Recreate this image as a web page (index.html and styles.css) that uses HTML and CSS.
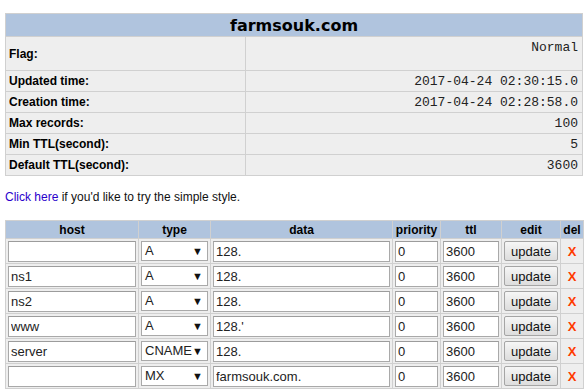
FILE: index.html
```html
<!DOCTYPE html>
<html>
<head>
<meta charset="utf-8">
<link rel="stylesheet" href="styles.css">
</head>
<body>
<div class="page">
  <table class="info">
    <colgroup><col class="c-label"><col></colgroup>
    <tr><th colspan="2" class="title">farmsouk.com</th></tr>
    <tr class="flag"><td class="label">Flag:</td><td class="val top">Normal</td></tr>
    <tr><td class="label">Updated time:</td><td class="val">2017-04-24 02:30:15.0</td></tr>
    <tr><td class="label">Creation time:</td><td class="val">2017-04-24 02:28:58.0</td></tr>
    <tr><td class="label">Max records:</td><td class="val">100</td></tr>
    <tr><td class="label">Min TTL(second):</td><td class="val">5</td></tr>
    <tr><td class="label">Default TTL(second):</td><td class="val">3600</td></tr>
  </table>

  <p class="note"><a href="#" class="link">Click here</a> if you'd like to try the simple style.</p>

  <table class="records">
    <colgroup>
      <col class="w-host"><col class="w-type"><col class="w-data"><col class="w-pri"><col class="w-ttl"><col class="w-edit"><col class="w-del">
    </colgroup>
    <tr class="head"><th>host</th><th>type</th><th>data</th><th>priority</th><th>ttl</th><th>edit</th><th>del</th></tr>
    <tr>
      <td><input class="in host" value=""></td>
      <td><span class="sel"><span class="sel-text">A</span><span class="arrow">▼</span></span></td>
      <td><input class="in data" value="128."></td>
      <td><input class="in pri" value="0"></td>
      <td><input class="in ttl" value="3600"></td>
      <td><button class="btn">update</button></td>
      <td class="del">X</td>
    </tr>
    <tr>
      <td><input class="in host" value="ns1"></td>
      <td><span class="sel"><span class="sel-text">A</span><span class="arrow">▼</span></span></td>
      <td><input class="in data" value="128."></td>
      <td><input class="in pri" value="0"></td>
      <td><input class="in ttl" value="3600"></td>
      <td><button class="btn">update</button></td>
      <td class="del">X</td>
    </tr>
    <tr>
      <td><input class="in host" value="ns2"></td>
      <td><span class="sel"><span class="sel-text">A</span><span class="arrow">▼</span></span></td>
      <td><input class="in data" value="128."></td>
      <td><input class="in pri" value="0"></td>
      <td><input class="in ttl" value="3600"></td>
      <td><button class="btn">update</button></td>
      <td class="del">X</td>
    </tr>
    <tr>
      <td><input class="in host" value="www"></td>
      <td><span class="sel"><span class="sel-text">A</span><span class="arrow">▼</span></span></td>
      <td><input class="in data" value="128.'"></td>
      <td><input class="in pri" value="0"></td>
      <td><input class="in ttl" value="3600"></td>
      <td><button class="btn">update</button></td>
      <td class="del">X</td>
    </tr>
    <tr>
      <td><input class="in host" value="server"></td>
      <td><span class="sel"><span class="sel-text">CNAME</span><span class="arrow">▼</span></span></td>
      <td><input class="in data" value="128."></td>
      <td><input class="in pri" value="0"></td>
      <td><input class="in ttl" value="3600"></td>
      <td><button class="btn">update</button></td>
      <td class="del">X</td>
    </tr>
    <tr>
      <td><input class="in host" value=""></td>
      <td><span class="sel"><span class="sel-text">MX</span><span class="arrow">▼</span></span></td>
      <td><input class="in data" value="farmsouk.com."></td>
      <td><input class="in pri" value="0"></td>
      <td><input class="in ttl" value="3600"></td>
      <td><button class="btn">update</button></td>
      <td class="del">X</td>
    </tr>
  </table>
</div>
</body>
</html>
```

FILE: styles.css
```css
html, body {
  margin: 0;
  padding: 0;
  background: #fff;
}
body {
  font-family: "Liberation Sans", Arial, sans-serif;
  font-size: 12px;
  color: #000;
}
.page {
  padding: 13px 5px 0 5px;
}
table {
  border-collapse: collapse;
  width: 578px;
  table-layout: fixed;
}
td, th {
  border: 1px solid #d0d0d0;
  background: #eeeeee;
  padding: 0;
}
.info .c-label { width: 240px; }
.info .title {
  background: #b0c4de;
  height: 22px;
  font-family: "DejaVu Sans", Verdana, sans-serif;
  font-size: 16px;
  font-weight: bold;
  text-align: center;
  color: #000;
}
.info td { height: 20px; }
.info .flag td { height: 30px; }
.label {
  font-weight: bold;
  padding-left: 3px;
  vertical-align: middle;
}
.val {
  font-family: "Liberation Mono", "Courier New", monospace;
  font-size: 13px;
  text-align: right;
  padding-right: 4px;
  vertical-align: middle;
  color: #222;
}
.val.top {
  vertical-align: top;
  padding-top: 3px;
}
.note {
  margin: 14px 0 16px 0;
  font-size: 12px;
  line-height: 14px;
  color: #111;
}
.link {
  color: #2a00cc;
  text-decoration: none;
}
.records .w-host { width: 133px; }
.records .w-type { width: 72px; }
.records .w-data { width: 182px; }
.records .w-pri { width: 48px; }
.records .w-ttl { width: 61px; }
.records .w-edit { width: 59px; }
.records .w-del { width: 23px; }
.records .head th {
  background: #b0c4de;
  height: 17px;
  font-weight: bold;
  font-size: 12px;
  text-align: center;
}
.records td {
  height: 24px;
  padding: 0 2px;
  vertical-align: middle;
}
.in {
  box-sizing: border-box;
  display: block;
  width: 100%;
  height: 21px;
  margin: 0;
  border: 1px solid #a9a9a9;
  border-top-color: #9c9c9c;
  padding: 1px 2px 0 2px;
  font-family: "Liberation Sans", Arial, sans-serif;
  font-size: 13px;
  color: #222;
  background: #fff;
  outline: none;
}
.sel {
  position: relative;
  display: block;
  box-sizing: border-box;
  width: 100%;
  height: 20px;
  border: 1px solid #a9a9a9;
  background: #fff;
  font-size: 13px;
  line-height: 18px;
  color: #222;
}
.sel-text {
  padding-left: 3px;
}
.arrow {
  position: absolute;
  right: 4px;
  top: 0;
  font-size: 11px;
  line-height: 18px;
  color: #111;
}
.btn {
  box-sizing: border-box;
  display: block;
  width: 100%;
  height: 20px;
  margin: 0;
  padding: 0;
  border: 1px solid #a5a5a5;
  border-radius: 2px;
  background: linear-gradient(#f6f6f6, #dddddd);
  font-family: "Liberation Sans", Arial, sans-serif;
  font-size: 13px;
  color: #111;
}
.records td.del {
  text-align: center;
  color: #ff3b00;
  font-weight: bold;
  font-size: 13px;
  padding: 0;
}
```
